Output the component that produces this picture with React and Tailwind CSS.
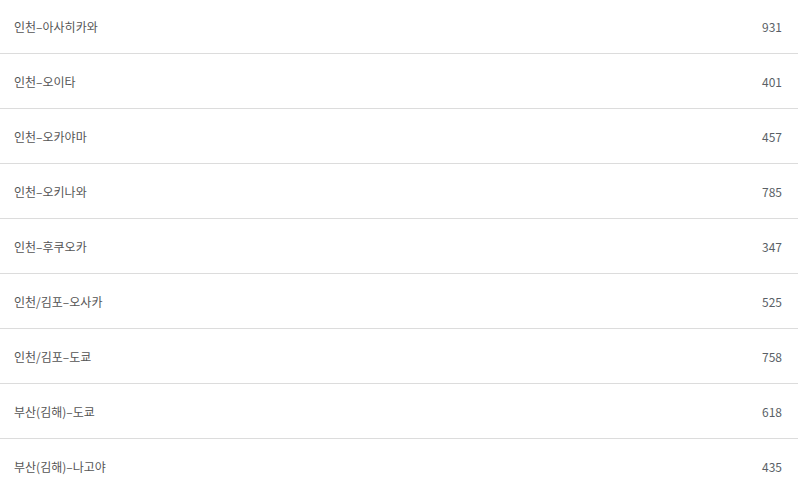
import React from 'react';

const routes = [
  { name: '인천–아사히카와', count: 931 },
  { name: '인천–오이타', count: 401 },
  { name: '인천–오카야마', count: 457 },
  { name: '인천–오키나와', count: 785 },
  { name: '인천–후쿠오카', count: 347 },
  { name: '인천/김포–오사카', count: 525 },
  { name: '인천/김포–도쿄', count: 758 },
  { name: '부산(김해)–도쿄', count: 618 },
  { name: '부산(김해)–나고야', count: 435 },
];

const App = () => {
  return (
    <div
      className="w-[798px] h-[486px] overflow-hidden bg-white text-[#555] text-[12px]"
      style={{ fontFamily: '"Noto Sans CJK KR", "Noto Sans", sans-serif' }}
    >
      <ul className="-mt-px">
        {routes.map((r) => (
          <li
            key={r.name}
            className="h-[55px] flex items-center justify-between pl-[14px] pr-[16px] pt-[1px] border-b border-[#dcdcdc]"
          >
            <span>{r.name}</span>
            <span className="text-[#5a5f66]">{r.count}</span>
          </li>
        ))}
      </ul>
    </div>
  );
};

export default App;
